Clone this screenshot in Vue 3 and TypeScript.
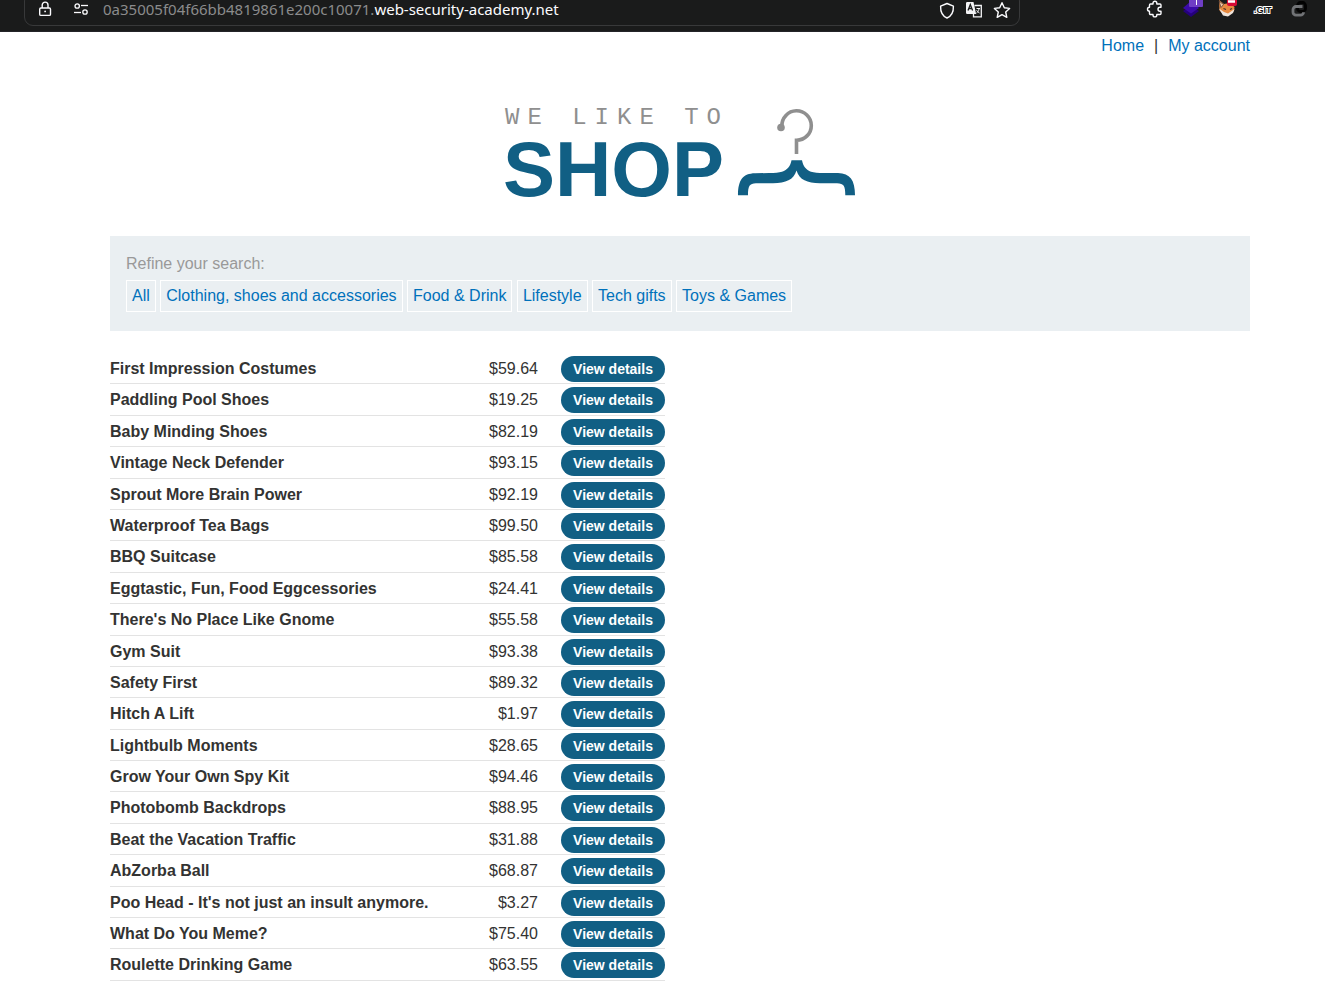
<script setup lang="ts">
interface Product {
  id: number
  name: string
  price: string
}

const categories: string[] = [
  'All',
  'Clothing, shoes and accessories',
  'Food & Drink',
  'Lifestyle',
  'Tech gifts',
  'Toys & Games',
]

const catalogue: [string, string][] = [
  ['First Impression Costumes', '$59.64'],
  ['Paddling Pool Shoes', '$19.25'],
  ['Baby Minding Shoes', '$82.19'],
  ['Vintage Neck Defender', '$93.15'],
  ['Sprout More Brain Power', '$92.19'],
  ['Waterproof Tea Bags', '$99.50'],
  ['BBQ Suitcase', '$85.58'],
  ['Eggtastic, Fun, Food Eggcessories', '$24.41'],
  ["There's No Place Like Gnome", '$55.58'],
  ['Gym Suit', '$93.38'],
  ['Safety First', '$89.32'],
  ['Hitch A Lift', '$1.97'],
  ['Lightbulb Moments', '$28.65'],
  ['Grow Your Own Spy Kit', '$94.46'],
  ['Photobomb Backdrops', '$88.95'],
  ['Beat the Vacation Traffic', '$31.88'],
  ['AbZorba Ball', '$68.87'],
  ["Poo Head - It's not just an insult anymore.", '$3.27'],
  ['What Do You Meme?', '$75.40'],
  ['Roulette Drinking Game', '$63.55'],
]

const products: Product[] = catalogue.map(([name, price], index) => ({ id: index + 1, name, price }))
</script>

<template>
  <div class="window">
    <header class="toolbar">
      <div class="address">
        <button class="tool wide" type="button" aria-label="Connection security">
          <svg width="16" height="20" viewBox="0 0 16 20" fill="none" stroke="#fbfbfe" stroke-width="1.4">
            <rect x="2.700" y="9" width="10.800" height="7.400" rx="1.200" />
            <path d="M5.200 9V6a2.900 2.900 0 0 1 5.800 0V9" />
            <circle cx="8.100" cy="12.400" r="0.900" fill="#fbfbfe" stroke="none" />
          </svg>
        </button>
        <button class="tool wide" type="button" aria-label="Site permissions">
          <svg width="16" height="20" viewBox="0 0 16 20" fill="none" stroke="#fbfbfe" stroke-width="1.300">
            <circle cx="4.200" cy="7" r="2.200" />
            <path d="M8 6.500h7" />
            <circle cx="12" cy="13" r="2.200" />
            <path d="M1 13.500h7" />
          </svg>
        </button>
        <div class="url"><span class="subdomain">0a35005f04f66bb4819861e200c10071.</span>web-security-academy.net</div>
        <button class="tool" type="button" aria-label="Tracking protection">
          <svg width="18" height="20" viewBox="0 0 18 20" fill="none" stroke="#fbfbfe" stroke-width="1.400" stroke-linejoin="round">
            <path d="M10 4.500L16.400 7.200C16.600 12.500 14.500 17 10 19C5.500 17 3.400 12.500 3.600 7.200Z" />
          </svg>
        </button>
        <button class="tool" type="button" aria-label="Translate page">
          <svg width="18" height="20" viewBox="0 0 18 20">
            <path d="M2.200 3h6.300l2.600 12H2.200A1.200 1.200 0 0 1 1 13.800V4.200A1.200 1.200 0 0 1 2.200 3z" fill="#f4f4f6" />
            <path d="M3 11.500L5.300 5.500L7.600 11.500M3.800 9.500h3" fill="none" stroke="#1a1b1b" stroke-width="1.300" />
            <path d="M9.500 6.500H16.300v11.300H8.500v-3" fill="none" stroke="#f4f4f6" stroke-width="1.300" />
            <path d="M11.500 9.500h3.500M14 10c-.4 2.200-1.300 3.300-2.500 4M11.700 11.200c.6 1.500 1.600 2.300 2.800 2.800" fill="none" stroke="#f4f4f6" stroke-width="1" />
          </svg>
        </button>
        <button class="tool" type="button" aria-label="Bookmark this page">
          <svg width="18" height="20" viewBox="0 0 18 20" fill="none" stroke="#fbfbfe" stroke-width="1.400" stroke-linejoin="round">
            <path d="M9 3.700L11.300 8.800L16.600 9.400L12.700 13L13.800 18.300L9 15.600L4.200 18.300L5.300 13L1.400 9.400L6.700 8.800Z" />
          </svg>
        </button>
      </div>
      <div class="extensions">
        <button class="tool wide" type="button" aria-label="Extensions">
          <svg width="18" height="20" viewBox="0 0 18 20" fill="none" stroke="#fbfbfe" stroke-width="1.400" stroke-linejoin="round">
            <path d="M5.500 5H8V4.200a1.900 1.900 0 0 1 3.800 0V5H15a1 1 0 0 1 1 1V8.200H15a2 2 0 0 0 0 4H16V14.500a1 1 0 0 1-1 1H11.800V16a1.900 1.900 0 0 1-3.800 0V15.500H5.500a1 1 0 0 1-1-1V12.200a2 2 0 0 1 0-4V6a1 1 0 0 1 1-1z" />
          </svg>
        </button>
        <button class="tool wide" type="button" aria-label="Layers extension">
          <svg width="26" height="20" viewBox="0 0 26 20">
            <path d="M6 12L14 7L22 12L14 18Z" fill="#25007c" />
            <path d="M14 2L22 9L14 14.500L6 9Z" fill="#3b0ba8" />
            <rect x="12" y="-4" width="14" height="12" rx="1" fill="#6f3ec5" />
            <path d="M19.500 0v6" stroke="#fff" stroke-width="1" />
          </svg>
        </button>
        <button class="tool wide" type="button" aria-label="Proxy extension">
          <svg width="20" height="20" viewBox="0 0 20 20">
            <path d="M3 1L8 5L14 4L18.500 8L18 12L13 16.500L8 16L3.500 11.500Z" fill="#e78a40" />
            <path d="M3 9.500L8 13L12 14.500L18.500 10L17 14L12 17.500L7 16.500Z" fill="#eee4dc" />
            <path d="M3 2L7.500 5.500L5 8.500Z" fill="#f2cda9" stroke="#553b32" stroke-width="0.800" />
            <path d="M7.500 9.500l2.500 1M14 10.500l2-1" stroke="#40302a" stroke-width="1.200" />
            <rect x="11" y="-4" width="10" height="11" rx="2" fill="#d70a35" />
            <path d="M12 2.500h7" stroke="#fff" stroke-width="2.500" />
          </svg>
        </button>
        <button class="tool wide" type="button" aria-label="Git extension">
          <svg width="20" height="20" viewBox="0 0 20 20">
            <text class="git" x="2" y="14">.GIT</text>
          </svg>
        </button>
        <button class="tool wide" type="button" aria-label="Containers extension">
          <svg width="18" height="20" viewBox="0 0 18 20" fill="none" stroke-width="2.800">
            <rect x="8.500" y="3.500" width="8" height="9" rx="3" stroke="#020202" />
            <path d="M13.500 7.500H7a3 3 0 0 0-3 3V13.200a3 3 0 0 0 3 3h4.500a3 3 0 0 0 3-3" stroke="#717376" />
          </svg>
        </button>
      </div>
    </header>

    <main class="page">
      <nav class="account">
        <a href="#home">Home</a>
        <span>|</span>
        <a href="#account">My account</a>
      </nav>

      <div class="brand">
        <svg width="356" height="110" viewBox="-2 0 356 110" role="img" aria-label="We like to shop">
          <text class="tagline" x="1" y="20">WE LIKE TO</text>
          <text class="shop" x="-1" y="92">SHOP</text>
          <path d="M277.900 22A14.700 14.700 0 1 1 292.500 36.200V50" fill="none" stroke="#8f8f8f" stroke-width="3.600" />
          <circle cx="277" cy="23.500" r="3.800" fill="#8f8f8f" />
          <path d="M287.500 56.300H298C299 62 302 66 307 67.800C310 68.800 314 69 320 69H334C346 69.300 351 76 351 91.300H341.300C341.300 82 340 79.500 333 79.300H316C303 79 295.500 76 292.500 66.500C289.500 76 282 79 269 79.300H252C245.500 79.500 244 82 244 91.300H234C234 76 239 69.500 251 69.300L265 69C271 69 275 68.800 278 67.800C283.500 66 286.500 62 287.500 56.300Z" fill="#115f84" />
        </svg>
      </div>

      <section class="filters">
        <p>Refine your search:</p>
        <div class="choices">
          <template v-for="category in categories" :key="category"><a href="#products">{{ category }}</a>{{ ' ' }}</template>
        </div>
      </section>

      <table id="products" class="products" aria-label="Products">
        <tbody>
          <tr v-for="product in products" :key="product.id">
            <th scope="row">{{ product.name }}</th>
            <td class="price">{{ product.price }}</td>
            <td class="action"><a class="details" :href="`#product-${product.id}`">View details</a></td>
          </tr>
        </tbody>
      </table>
    </main>
  </div>
</template>

<style>
body {
  margin: 0;
  background: #fff;
}
</style>

<style scoped>
.window {
  color: #333332;
  font: 16px/24px "Liberation Sans", Arial, sans-serif;
}

a {
  color: #0071bb;
  text-decoration: none;
}

.toolbar {
  display: flex;
  align-items: flex-end;
  justify-content: space-between;
  box-sizing: border-box;
  height: 32px;
  padding: 0 9px 5px 24px;
  overflow: hidden;
  background: #1a1b1b;
  border-bottom: 1px solid #242428;
}

.address {
  display: flex;
  flex: 0 1 996px;
  align-items: center;
  box-sizing: border-box;
  height: 34px;
  padding: 0 3px 0 2px;
  border: 1px solid #38393a;
  border-radius: 9px;
}

.url {
  flex: 1;
  padding-left: 4px;
  color: #fbfbfe;
  font: 15px/20px "Noto Sans", sans-serif;
  white-space: nowrap;
}

.subdomain {
  color: #8b8b8c;
}

.extensions {
  display: flex;
  align-items: center;
  height: 34px;
}

.tool {
  display: flex;
  align-items: center;
  justify-content: center;
  width: 28px;
  height: 24px;
  padding: 0;
  background: none;
  border: 0;
}

.tool svg {
  overflow: visible;
}

.wide {
  width: 36px;
}

.git {
  fill: #111;
  stroke: #fff;
  stroke-width: 2px;
  paint-order: stroke;
  font: bold 9px "Liberation Sans", sans-serif;
}

.page {
  padding: 2px 75px 14px 110px;
}

.account {
  display: flex;
  justify-content: flex-end;
  gap: 10px;
}

.brand {
  display: flex;
  justify-content: center;
  padding: 46px 0 22px;
}

.tagline {
  fill: #8f8f8f;
  font: 24px "Liberation Mono", monospace;
  letter-spacing: 8px;
}

.shop {
  fill: #115f84;
  font: bold 78px "Liberation Sans", sans-serif;
}

.filters {
  padding: 16px 16px 19px;
  background: #eaeff2;
}

.filters p {
  margin: 0 0 4px;
  color: #999;
}

.choices a {
  display: inline-block;
  padding: 3px 5px;
  border: 1px solid #fff;
}

.products {
  margin-top: 22px;
  border-collapse: separate;
  border-spacing: 0;
  line-height: 1.4;
}

.products th,
.products td {
  padding: 5px 0 3px;
  border-bottom: 1px solid #e3e3e3;
}

.products th {
  width: 340px;
  text-align: left;
}

.products .price {
  width: 88px;
  text-align: right;
}

.products .action {
  width: 127px;
  padding: 3px 0 0;
  vertical-align: top;
}

.details {
  display: block;
  margin-left: 23px;
  border-radius: 13px;
  background: #115f84;
  color: #fff;
  font-size: 14px;
  font-weight: bold;
  line-height: 26px;
  text-align: center;
}
</style>
